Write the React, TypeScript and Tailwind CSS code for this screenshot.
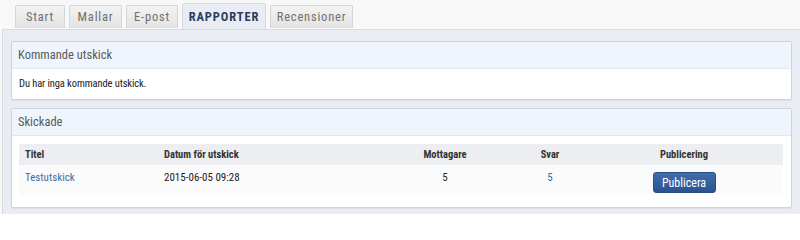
const tabs = [
	{ label: "Start", width: "w-[50px]" },
	{ label: "Mallar", width: "w-[53px]" },
	{ label: "E-post", width: "w-[52px]" },
	{ label: "RAPPORTER", width: "w-[84px]" },
	{ label: "Recensioner", width: "w-[83px]" },
];

function Tab({ label, width, active }: { label: string; width: string; active: boolean }) {
	if (active) {
		return (
			<div
				className={`-mb-px flex h-[27px] items-center justify-center rounded-t-[3px] border border-b-0 border-[#d3d9e2] bg-[#e9edf3] text-[12.5px] font-bold tracking-[0.9px] text-[#2c3d5b] ${width}`}
			>
				{label}
			</div>
		);
	}
	return (
		<div
			className={`mb-px flex h-[23px] items-center justify-center rounded-t-[2px] border border-b-0 border-[#d6d6d6] bg-gradient-to-b from-[#f3f3f3] to-[#e3e3e3] text-[12.5px] tracking-[0.8px] text-[#707070] ${width}`}
		>
			{label}
		</div>
	);
}

function Panel({
	title,
	children,
}: {
	title: string;
	children: React.ReactNode;
}) {
	return (
		<div className="rounded-[2px] border border-[#cdd4de] bg-white shadow-[0_1px_1px_rgba(0,0,0,0.06)]">
			<div className="flex h-[27px] items-center border-b border-[#e1e7ef] bg-[#eef5fd] px-[6px] text-[12.5px] text-[#5a5a5a]">
				{title}
			</div>
			{children}
		</div>
	);
}

export default function App() {
	return (
		<div
			className="flex h-[214px] w-[800px] flex-col overflow-hidden bg-[#f8f8f8]"
			style={{ fontFamily: '"Roboto Condensed", Roboto, sans-serif' }}
		>
			<div className="flex items-end gap-[4px] pl-[15px] pt-[3px]">
				{tabs.map((t) => (
					<Tab key={t.label} label={t.label} width={t.width} active={t.label === "RAPPORTER"} />
				))}
			</div>
			<div className="ml-[2px] flex-1 space-y-[8px] border-l border-t border-[#d6dce5] bg-[#e9edf3] pb-[10px] pl-[8px] pr-[8px] pt-[11px]">
				<Panel title="Kommande utskick">
					<div className="flex h-[30px] items-center px-[7px] text-[10.5px] tracking-[-0.1px] text-[#222]">
						Du har inga kommande utskick.
					</div>
				</Panel>
				<Panel title="Skickade">
					<div className="px-[7px] pb-[12px] pt-[8px]">
						<div className="grid grid-cols-[139px_217px_140px_70px_198px] text-[11px]">
							<div className="flex h-[21px] items-center bg-[#eceef2] px-[6px] text-[10.5px] font-bold text-[#333]">
								Titel
							</div>
							<div className="flex h-[21px] items-center bg-[#eceef2] px-[6px] text-[10.5px] font-bold text-[#333]">
								Datum för utskick
							</div>
							<div className="flex h-[21px] items-center justify-center bg-[#eceef2] text-[10.5px] font-bold text-[#333]">
								Mottagare
							</div>
							<div className="flex h-[21px] items-center justify-center bg-[#eceef2] text-[10.5px] font-bold text-[#333]">
								Svar
							</div>
							<div className="flex h-[21px] items-center justify-center bg-[#eceef2] text-[10.5px] font-bold text-[#333]">
								Publicering
							</div>
							<div className="h-[30px] bg-[#fbfbfb] px-[6px] pt-[5px] text-[#3d6b9e]">
								Testutskick
							</div>
							<div className="h-[30px] bg-[#fbfbfb] px-[6px] pt-[5px] text-[#222]">
								2015-06-05 09:28
							</div>
							<div className="h-[30px] bg-[#fbfbfb] pt-[5px] text-center text-[#222]">
								5
							</div>
							<div className="h-[30px] bg-[#fbfbfb] pt-[5px] text-center text-[#3d6b9e]">
								5
							</div>
							<div className="flex h-[30px] justify-center bg-[#fbfbfb] pt-[7px]">
								<button className="h-[21px] w-[63px] rounded-[3px] border border-[#2a4f85] bg-gradient-to-b from-[#3f6eab] to-[#2b5290] text-[12px] text-white">
									Publicera
								</button>
							</div>
						</div>
					</div>
				</Panel>
			</div>
		</div>
	);
}
